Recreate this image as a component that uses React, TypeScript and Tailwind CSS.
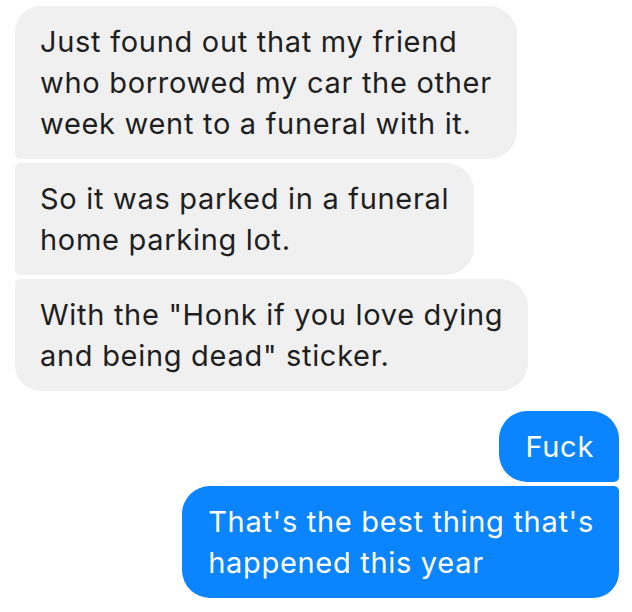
const incoming = [
  {
    lines: ["Just found out that my friend", "who borrowed my car the other", "week went to a funeral with it."],
    corners: "rounded-tl-[26px] rounded-tr-[28px] rounded-br-[28px] rounded-bl-[5px]",
  },
  {
    lines: ["So it was parked in a funeral", "home parking lot."],
    corners: "rounded-tl-[5px] rounded-tr-[28px] rounded-br-[28px] rounded-bl-[5px]",
  },
  {
    lines: ['With the "Honk if you love dying', 'and being dead" sticker.'],
    corners: "rounded-tl-[5px] rounded-tr-[28px] rounded-br-[28px] rounded-bl-[26px]",
  },
];

const outgoing = [
  {
    lines: ["Fuck"],
    corners: "rounded-tl-[28px] rounded-tr-[28px] rounded-br-[5px] rounded-bl-[28px]",
  },
  {
    lines: ["That's the best thing that's", "happened this year"],
    corners: "rounded-tl-[28px] rounded-tr-[5px] rounded-br-[26px] rounded-bl-[28px]",
  },
];

export default function App() {
  return (
    <div
      className="w-[632px] h-[612px] bg-white overflow-hidden pt-[6px] px-[15px] pr-[13px]"
      style={{ fontFamily: "Inter, 'Open Sans', sans-serif" }}
    >
      {/* Their messages */}
      <div className="flex flex-col items-start gap-[4px]">
        {incoming.map((m, i) => (
          <div
            key={i}
            className={`w-fit bg-[#f0f0f0] text-[#1f1f1f] text-[29px] leading-[41px] tracking-[0.7px] pl-[25px] pr-[25px] py-[15px] ${m.corners}`}
          >
            {m.lines.map((l, j) => (
              <div key={j} className="whitespace-nowrap">{l}</div>
            ))}
          </div>
        ))}
      </div>

      {/* My messages */}
      <div className="flex flex-col items-end gap-[4px] mt-[20px]">
        {outgoing.map((m, i) => (
          <div
            key={i}
            className={`w-fit bg-[#0a84ff] text-white text-[29px] leading-[41px] tracking-[0.7px] pl-[26px] pr-[25px] py-[15px] ${m.corners}`}
          >
            {m.lines.map((l, j) => (
              <div key={j} className="whitespace-nowrap">{l}</div>
            ))}
          </div>
        ))}
      </div>
    </div>
  );
}
